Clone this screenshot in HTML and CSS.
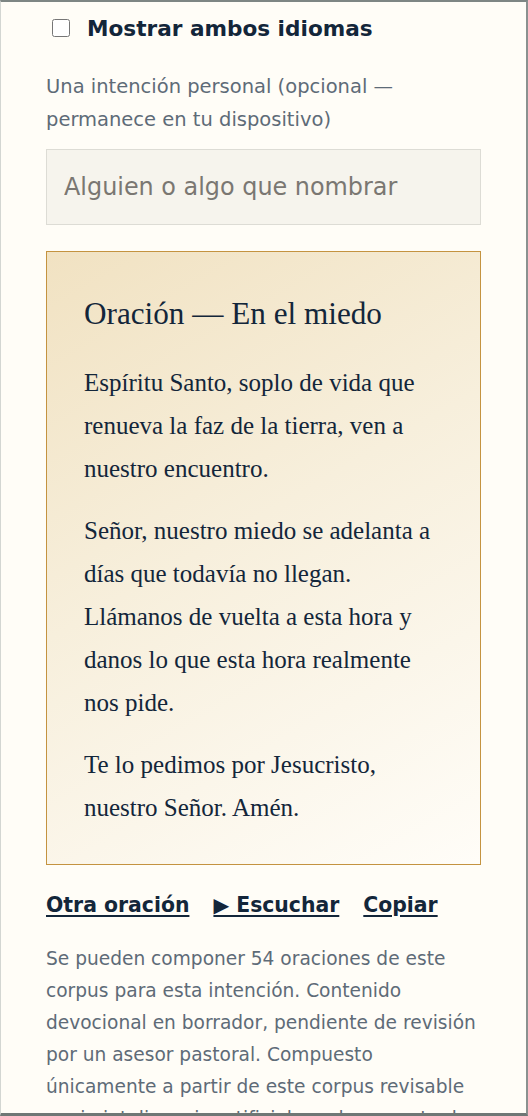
FILE: index.html
```html
<!DOCTYPE html>
<html lang="es">
<head>
<meta charset="utf-8">
<title>Oración</title>
<link rel="stylesheet" href="styles.css">
</head>
<body>
<div class="window">
  <div class="content">
    <label class="toggle">
      <input type="checkbox" class="toggle-box">
      <span class="toggle-text">Mostrar ambos idiomas</span>
    </label>

    <label class="field-label" for="intent">Una intención personal (opcional — permanece en tu dispositivo)</label>
    <input id="intent" class="field" type="text" placeholder="Alguien o algo que nombrar">

    <article class="card">
      <h2 class="card-title">Oración — En el miedo</h2>
      <p class="card-text">Espíritu Santo, soplo de vida que renueva la faz de la tierra, ven a nuestro encuentro.</p>
      <p class="card-text">Señor, nuestro miedo se adelanta a días que todavía no llegan. Llámanos de vuelta a esta hora y danos lo que esta hora realmente nos pide.</p>
      <p class="card-text">Te lo pedimos por Jesucristo, nuestro Señor. Amén.</p>
    </article>

    <nav class="actions">
      <a href="#" class="action">Otra oración</a>
      <a href="#" class="action">▶ Escuchar</a>
      <a href="#" class="action">Copiar</a>
    </nav>

    <p class="note">Se pueden componer 54 oraciones de este corpus para esta intención. Contenido devocional en borrador, pendiente de revisión por un asesor pastoral. Compuesto únicamente a partir de este corpus revisable — sin inteligencia artificial en el momento de la oración.</p>
  </div>
</div>
</body>
</html>
```
FILE: styles.css
```css
html, body {
  margin: 0;
  padding: 0;
  background: #7e8684;
}

.window {
  box-sizing: border-box;
  width: 528px;
  height: 1116px;
  overflow: hidden;
  background: #fffdf7;
  border-top: 2px solid #7e8684;
  border-right: 2px solid #8a918f;
  border-bottom: 3px solid #6f7775;
  border-left: 1px solid #d3d6d2;
}

.content {
  padding: 14px 46px 0 45px;
  font-family: "DejaVu Sans", Verdana, sans-serif;
  color: #13263a;
}

.toggle {
  display: flex;
  align-items: center;
  gap: 17px;
  height: 24px;
}

.toggle-box {
  width: 18px;
  height: 18px;
  margin: 0 0 0 6px;
}

.toggle-text {
  font-weight: bold;
  font-size: 21.6px;
}

.field-label {
  display: block;
  margin-top: 30px;
  font-size: 19.5px;
  line-height: 33px;
  color: #5e6b77;
}

.field {
  display: block;
  box-sizing: border-box;
  width: 435px;
  height: 76px;
  margin-top: 13px;
  padding: 0 17px;
  border: 1px solid #dddcd5;
  background: #f6f4ed;
  font-family: "DejaVu Sans", Verdana, sans-serif;
  font-size: 23.9px;
  color: #13263a;
  outline: none;
}

.field::placeholder {
  color: #7a7772;
}

.card {
  box-sizing: border-box;
  width: 435px;
  margin-top: 26px;
  padding: 42px 36px 35px 37px;
  border: 1px solid #c49340;
  background: linear-gradient(150deg, #f1e2c2 0%, #f7efdc 45%, #fffdf8 100%);
  font-family: "Liberation Serif", "Times New Roman", serif;
  color: #13263a;
}

.card-title {
  margin: 0 0 27px;
  font-weight: normal;
  font-size: 31.2px;
  line-height: 40px;
}

.card-text {
  margin: 0 0 19px;
  font-size: 25px;
  line-height: 43px;
}

.card-text:last-child {
  margin-bottom: 0;
}

.actions {
  display: flex;
  gap: 24px;
  margin-top: 28px;
}

.action {
  font-weight: bold;
  font-size: 20.4px;
  line-height: 24px;
  color: #13263a;
  text-decoration: underline;
  text-decoration-thickness: 2px;
  text-underline-offset: 3px;
}

.note {
  margin: 26px 0 0;
  font-size: 18.6px;
  line-height: 32px;
  color: #5e6b77;
}
```
